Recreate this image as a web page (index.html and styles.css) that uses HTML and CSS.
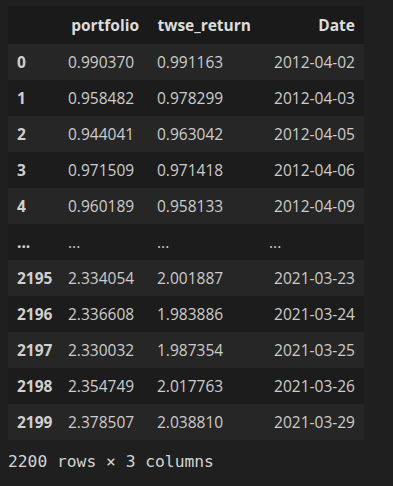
FILE: index.html
```html
<!DOCTYPE html>
<html>
<head>
<meta charset="utf-8">
<link rel="stylesheet" href="styles.css">
</head>
<body>
<div class="output">
  <table class="df">
    <thead>
      <tr><th class="c-idx"></th><th class="c-p">portfolio</th><th class="c-t">twse_return</th><th class="c-d">Date</th></tr>
    </thead>
    <tbody>
      <tr><th>0</th><td>0.990370</td><td>0.991163</td><td class="r">2012-04-02</td></tr>
      <tr><th>1</th><td>0.958482</td><td>0.978299</td><td class="r">2012-04-03</td></tr>
      <tr><th>2</th><td>0.944041</td><td>0.963042</td><td class="r">2012-04-05</td></tr>
      <tr><th>3</th><td>0.971509</td><td>0.971418</td><td class="r">2012-04-06</td></tr>
      <tr><th>4</th><td>0.960189</td><td>0.958133</td><td class="r">2012-04-09</td></tr>
      <tr class="ell"><th>...</th><td>...</td><td>...</td><td>...</td></tr>
      <tr><th>2195</th><td>2.334054</td><td>2.001887</td><td class="r">2021-03-23</td></tr>
      <tr><th>2196</th><td>2.336608</td><td>1.983886</td><td class="r">2021-03-24</td></tr>
      <tr><th>2197</th><td>2.330032</td><td>1.987354</td><td class="r">2021-03-25</td></tr>
      <tr><th>2198</th><td>2.354749</td><td>2.017763</td><td class="r">2021-03-26</td></tr>
      <tr><th>2199</th><td>2.378507</td><td>2.038810</td><td class="r">2021-03-29</td></tr>
    </tbody>
  </table>
  <p class="shape">2200 rows × 3 columns</p>
</div>
</body>
</html>
```
FILE: styles.css
```css
html, body {
  margin: 0;
  padding: 0;
  background: #1f1f1f;
}
.output {
  padding: 6px 0 0 8px;
}
.df {
  border-collapse: collapse;
  border-spacing: 0;
  table-layout: fixed;
  width: 356px;
  font-family: "Open Sans", "Noto Sans", sans-serif;
  font-size: 15.5px;
  color: #cccccc;
}
.df th, .df td {
  padding: 0 9px;
  height: 36px;
  white-space: nowrap;
  box-sizing: border-box;
  line-height: 20px;
}
.df thead th {
  height: 38px;
  text-align: right;
  font-weight: 700;
  color: #dcdcdc;
  background: #1a1a1a;
}
.c-idx { width: 51px; }
.c-p { width: 89px; }
.c-t { width: 112px; }
.c-d { width: 104px; }
.df tbody th {
  text-align: left;
  font-weight: 700;
  color: #d0d0d0;
}
.df tbody td {
  text-align: left;
}
.df tbody td.r {
  text-align: right;
}
.df tbody tr:nth-child(odd) {
  background: #262626;
}
.df tbody tr:nth-child(even) {
  background: #1c1c1c;
}
.shape {
  margin: 10px 0 0 0;
  font-family: "DejaVu Sans Mono", monospace;
  font-size: 16.3px;
  line-height: 24px;
  color: #d4d4d4;
}
```
